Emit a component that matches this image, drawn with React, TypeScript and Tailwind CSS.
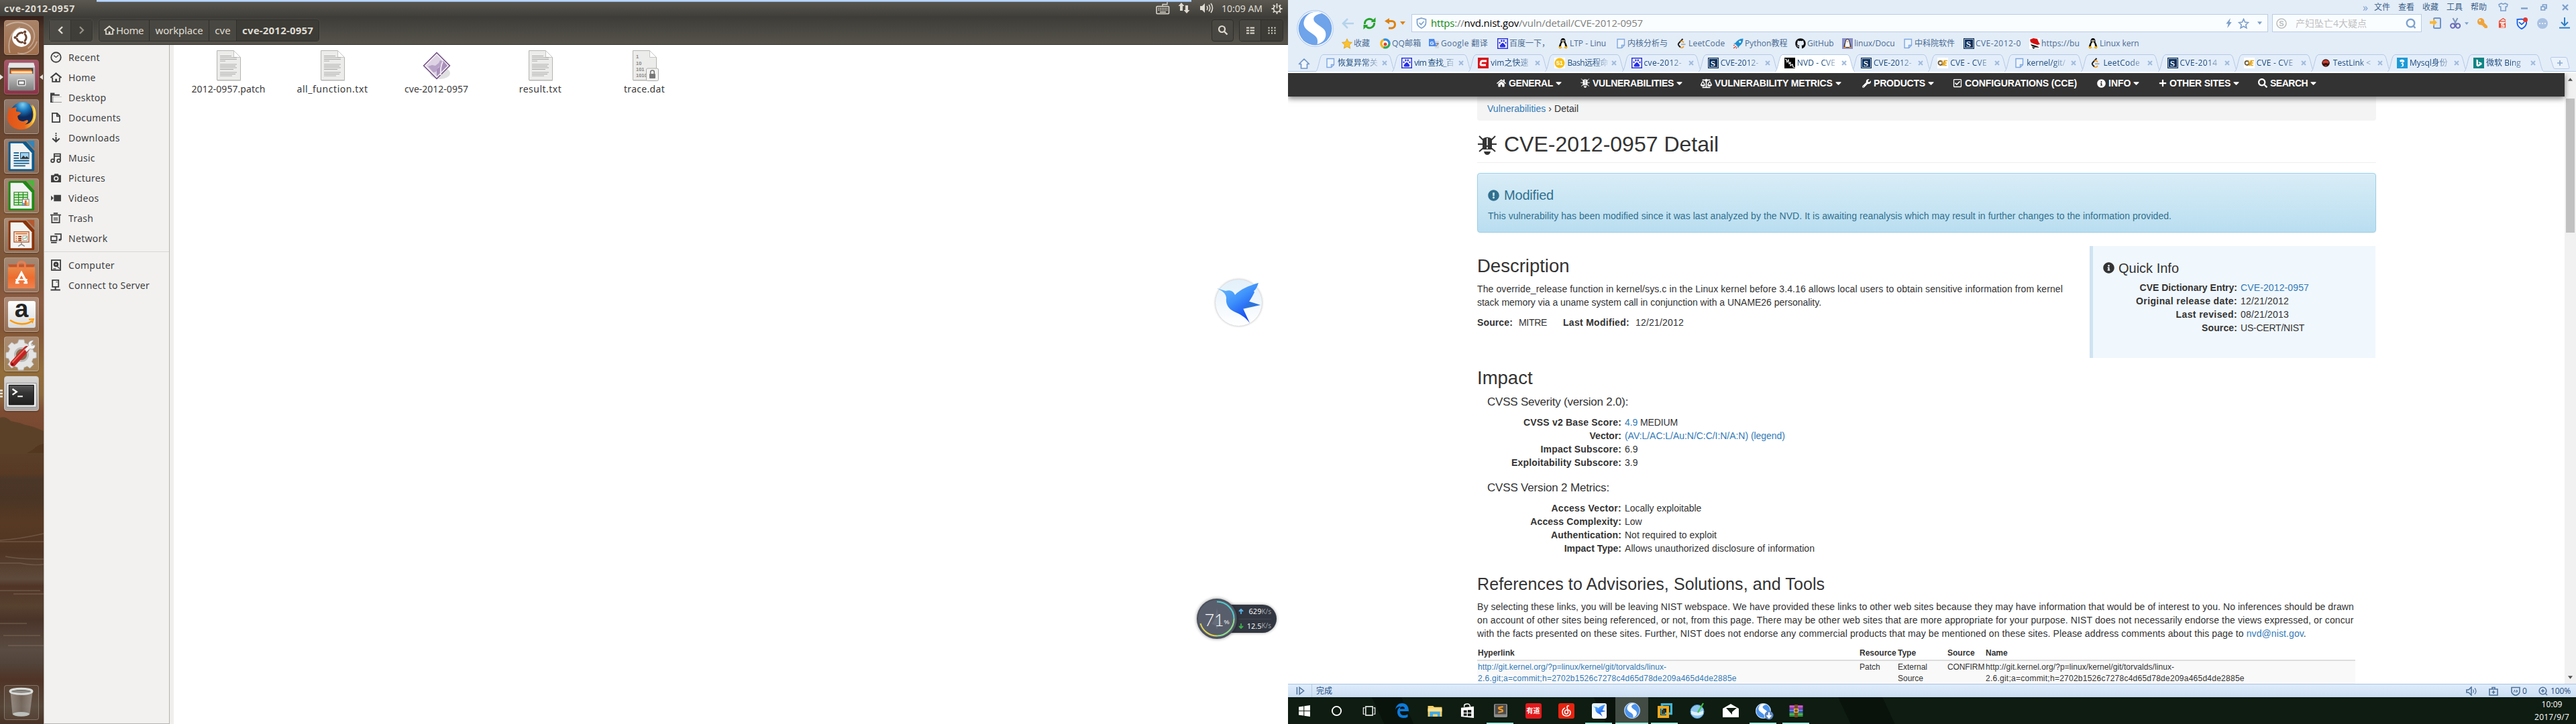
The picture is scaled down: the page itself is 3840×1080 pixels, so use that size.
import type { ReactNode } from "react";
import {
  FaBalanceScale, FaCaretDown, FaGithub, FaHome, FaInfoCircle, FaPlus, FaRegCheckSquare, FaSearch, FaWrench, FaKey, FaExclamationCircle,
} from "react-icons/fa";

/* ---------- Ubuntu side ---------- */

function LauncherArt({ kind }: { kind: string }) {
  switch (kind) {
    case "ubuntu":
      return (
        <svg viewBox="0 0 52 52" className="size-full">
          <path d="M2 8C20-4 48 4 46 26c-1 8-6 14-10 17M8 50C4 36 8 16 24 10M20 50c14 4 26-6 30-18" fill="none" stroke="#fff" strokeOpacity=".35" strokeWidth="2" />
          <circle cx="26" cy="26" r="14.5" fill="#fff" />
          <circle cx="26" cy="26" r="7.4" fill="none" stroke="#6b4430" strokeWidth="3.2" />
          <path d="M26 26 14 26M26 26l6-10.4M26 26l6 10.4" stroke="#fff" strokeWidth="1.6" />
          <circle cx="26" cy="26" r="5.6" fill="#fff" />
          <circle cx="16.2" cy="26" r="2.2" fill="#6b4430" /><circle cx="31.3" cy="17.4" r="2.2" fill="#6b4430" /><circle cx="31.3" cy="34.6" r="2.2" fill="#6b4430" />
        </svg>
      );
    case "files":
      return (
        <svg viewBox="0 0 52 52" className="size-full">
          <defs><linearGradient id="cab" x2="0" y2="1"><stop offset="0" stopColor="#c9c9c9" /><stop offset="1" stopColor="#7d7d7d" /></linearGradient></defs>
          <path d="M7 4h38l2 8v34H5V12z" fill="#b5b5b5" /><path d="M7 4h38l2 7H5z" fill="#e6e6e6" />
          <path d="M8 12h36v9H8z" fill="#3c3430" /><path d="M9 14h33v7H9z" fill="#e2711d" /><path d="M11 17h32v4H11z" fill="#f6b26b" /><path d="M10 17.500h32v1.500H10z" fill="#fff" />
          <path d="M7 21h38v26H7z" fill="url(#cab)" />
          <rect x="19" y="29" width="14" height="11" rx="2" fill="#d9d9d9" /><rect x="21.500" y="32" width="9" height="5.500" fill="#f3f3f3" stroke="#444" strokeWidth="1.200" />
        </svg>
      );
    case "firefox":
      return (
        <svg viewBox="0 0 52 52" className="size-full">
          <defs>
            <radialGradient id="fxb" cx=".5" cy=".1"><stop offset="0" stopColor="#7fd0f0" /><stop offset=".5" stopColor="#1a78bd" /><stop offset="1" stopColor="#0e2a5c" /></radialGradient>
            <linearGradient id="fxo" x1="0" x2="1"><stop offset="0" stopColor="#e0541a" /><stop offset=".6" stopColor="#e8641b" /><stop offset="1" stopColor="#fbd23a" /></linearGradient>
          </defs>
          <circle cx="28" cy="23" r="19.500" fill="url(#fxb)" />
          <path d="M7 9c1 4 2 5 3 5 2-2 6-3 9-2-1 2-2 4-1 6 3 0 6 1 7 2 0 3-4 3-5 5 0 6 4 9 10 8 3-1 5-2 6-1 1 2-2 5-5 6 8 0 13-6 13-15 0-7-2-12-5-16 7 4 10 10 9 19-1 11-10 20-22 20S4 38 4 27C4 20 7 16 7 9z" fill="url(#fxo)" />
          <path d="M42 7c5 9 6 20 0 29 4-2 6-8 6-12 1-7-1-13-6-17z" fill="#fde05a" />
        </svg>
      );
    case "writer":
    case "calc":
    case "impress": {
      const c = kind === "writer" ? ["#0b5a8e", "#2f86bd"] : kind === "calc" ? ["#1c8a14", "#4bb53c"] : ["#8a3208", "#b3592f"];
      return (
        <svg viewBox="0 0 52 52" className="size-full">
          <path d="M9 3h24l13 15v29q0 2-2 2H8q-2 0-2-2V5q0-2 3-2z" fill={c[0]} />
          <path d="M34 2h12v12z" fill={c[1]} />
          <path d="M9 6h19l14 15v25H9z" fill="#f3f3f3" />
          {kind === "writer" && (<>
            <path d="M14 21h8M14 25h8M14 29h8M14 33h24M14 37h24M14 41h18" stroke="#0b5a8e" strokeWidth="1.900" />
            <rect x="24.500" y="20.500" width="13" height="9.500" fill="#9fd3f2" stroke="#0b4a74" /><path d="M25 30l4-5 3 3 2-2 4 4z" fill="#333" />
          </>)}
          {kind === "calc" && (<>
            <path d="M14.500 20.500h21v20h-21zM14.500 24.500h21M14.500 28.500h21M14.500 32.500h21M14.500 36.500h21M21.500 20.500v20M28.500 20.500v20" fill="#d7f2cf" stroke="#1c8a14" strokeWidth="1.200" />
            <rect x="27.500" y="31.500" width="10" height="9.500" fill="#fff" stroke="#777" /><path d="M28.500 37h2.500v4h-2.500z" fill="#2a9fe0" /><path d="M31 33h3v8h-3z" fill="#e0662a" /><path d="M34.500 36h2.500v5h-2.500z" fill="#f3b72e" />
          </>)}
          {kind === "impress" && (<>
            <rect x="14.500" y="20.500" width="23" height="16" fill="#fbe8dd" stroke="#b3501c" strokeWidth="1.300" />
            <path d="M17 23.500h18" stroke="#e0762a" strokeWidth="1.800" /><path d="M17 28h2M17 31h2M17 34h2" stroke="#e0762a" strokeWidth="1.500" /><path d="M21 28h5M21 31h5M21 34h5" stroke="#8a3208" strokeWidth="1.900" />
            <path d="M28 27h7v7h-7z" fill="#fff" stroke="#999" /><path d="M29 32l2-2 1 1 2-3" fill="none" stroke="#3a3" /><path d="M26 37v3l-5 3M26 40l5 3" fill="none" stroke="#888" strokeWidth="1.500" />
          </>)}
        </svg>
      );
    }
    case "software":
      return (
        <svg viewBox="0 0 52 52" className="size-full">
          <defs><linearGradient id="bag" x2="0" y2="1"><stop offset="0" stopColor="#e88a4c" /><stop offset=".5" stopColor="#ee6c2c" /><stop offset="1" stopColor="#f0834e" /></linearGradient></defs>
          <path d="M5 10h42l-3 5H8z" fill="#c4552a" /><path d="M5 14h42v33H5z" fill="url(#bag)" />
          <path d="M20.500 17v-7q0-4 5.500-4t5.500 4v7" fill="none" stroke="#f07c4a" strokeWidth="3" />
          <path d="M18 38l8-15 8 15" fill="none" stroke="#fff" strokeWidth="3.600" /><path d="M17 33.500h18M16.500 38.500h6M29.500 38.500h6" stroke="#fff" strokeWidth="2.400" />
        </svg>
      );
    case "amazon":
      return (
        <div className="relative mx-auto mt-[5px] h-[40px] w-[41px] rounded-[3px] bg-gradient-to-b from-white to-[#d9d9d9] text-center">
          <span className="block h-[28px] font-['Liberation_Sans'] text-[37px] leading-[23px] font-bold text-[#222]">a</span>
          <svg viewBox="0 0 41 12" className="absolute bottom-[2px] left-0 h-[13px] w-full"><path d="M3 3c10 7 24 8 33 1" fill="none" stroke="#f90" strokeWidth="2.400" /><path d="M31 2l7-.5-2 6" fill="none" stroke="#f90" strokeWidth="1.800" /></svg>
        </div>
      );
    case "settings":
      return (
        <svg viewBox="0 0 52 52" className="size-full">
          <path d="M22 4h8l1 5 5 2 4-3 6 6-3 4 2 5 4 1v8l-5 1-2 5 3 4-6 6-4-3-5 2-1 4h-8l-1-4-5-2-4 3-6-6 3-4-2-5-4-1v-8l4-1 2-5-3-4 6-6 4 3 5-2z" fill="#e4e4e4" stroke="#bbb" />
          <circle cx="26" cy="27" r="10" fill="#8d6a4c" stroke="#bbb" strokeWidth="3" />
          <path d="M34 18 13 41" stroke="#c32222" strokeWidth="9" strokeLinecap="round" /><path d="M33 17 12 39" stroke="#e86a5c" strokeWidth="2" />
          <path d="M31 19l6-6c-2-5 3-9 8-8l-4 5 1 3 5-1c1 5-4 8-8 6l-5 5z" fill="#f2f2f2" stroke="#999" strokeWidth=".8" />
          <circle cx="12" cy="42" r="1.800" fill="#7a1111" />
        </svg>
      );
    case "terminal":
      return (
        <svg viewBox="0 0 52 52" className="size-full">
          <defs><linearGradient id="term" x2="0" y2="1"><stop offset="0" stopColor="#5a5a5a" /><stop offset=".4" stopColor="#333" /><stop offset="1" stopColor="#1f1f1f" /></linearGradient></defs>
          <path d="M3 10h46v37H3z" fill="#eee" stroke="#777" strokeWidth=".8" /><path d="M6.500 13h38.500v30.500H6.500z" fill="url(#term)" stroke="#000" />
          <path d="M12 19l6.500 4.500L12 28" fill="none" stroke="#fff" strokeWidth="2.400" /><path d="M20 30.500h8" stroke="#fff" strokeWidth="2" />
        </svg>
      );
    default:
      return (
        <svg viewBox="0 0 52 52" className="size-full">
          <defs><linearGradient id="bin"><stop offset="0" stopColor="#fff" stopOpacity=".35" /><stop offset=".5" stopColor="#fff" stopOpacity=".15" /><stop offset="1" stopColor="#fff" stopOpacity=".35" /></linearGradient></defs>
          <path d="M9 11h34l-4 33q-13 5-27 0z" fill="url(#bin)" /><ellipse cx="25.500" cy="44" rx="13" ry="3.500" fill="#c9cfcc" fillOpacity=".85" />
          <ellipse cx="25.500" cy="8.500" rx="17" ry="4" fill="none" stroke="#d9dcda" strokeWidth="3.400" /><ellipse cx="25.500" cy="9" rx="15" ry="2" fill="#8d8a86" />
        </svg>
      );
  }
}

const glass = "bg-gradient-to-b from-white/30 to-white/15 border-white/25";
const launcher: [string, string][] = [
  ["ubuntu", "bg-gradient-to-b from-[#a98368] to-[#a06f4c] border-[#b58e74]"],
  ["files", "bg-gradient-to-b from-[#a4596a] to-[#8a3448] border-[#a85a66]"],
  ["firefox", glass], ["writer", glass], ["calc", glass], ["impress", glass], ["software", glass], ["amazon", glass], ["settings", glass],
  ["terminal", "bg-gradient-to-b from-[#d9d7d5] to-[#aaa6a4] border-[#c9c5c2]"],
];

function Launcher() {
  return (
    <aside className="relative flex w-[65px] shrink-0 flex-col bg-[linear-gradient(to_bottom,#33201a_0,#4d3327_20px,#5b3d2b_90px,#6f4a33_200px,#845b3b_300px,#7d563a_380px,#8d5c41_430px,#855837_470px,#936d3a_530px,#8d693c_565px,#7d4c33_590px,#75482f_630px,#5a3f28_650px,#583a24_682px,#4b3728_690px,#4a3525_720px,#583a24_755px,#4f3524_800px,#5e4a3b_840px,#503527_850px,#57412f_880px,#4a3429_900px,#5a4c42_945px,#52443a_965px,#4f3426_990px,#554638_1030px,#493226_1056px)] px-[6px] pt-[6px]">
      <svg viewBox="0 0 65 400" className="absolute top-[594px] left-0 h-[400px] w-[65px]">
        <path d="M0 5q8-3 16 5 12 2 22 6 10 1 27 9v34H0z" fill="#5c4129" />
        <path d="M50 52q5-6 15-8v14H40z" fill="#54371f" />
        <path d="M0 188q30-2 65-10M0 190h65M8 212q20 4 57 4M0 222h30q20 4 35 2M0 263h60M20 268h45M5 330h55M0 312h40M12 345h53" fill="none" stroke="#8d7a68" strokeOpacity=".45" strokeWidth="1.300" />
      </svg>
      <div className="relative flex flex-1 flex-col gap-[7px]">
        {launcher.map(([k, c]) => (
          <div key={k} className={`h-[52px] w-[52px] rounded-[4px] border ${c} shadow-[0_1px_2px_rgba(0,0,0,.35)]`}><LauncherArt kind={k} /></div>
        ))}
        <div className="mt-auto mb-[6px] h-[52px] w-[52px] rounded-[4px] border border-white/25 bg-white/5"><LauncherArt kind="trash" /></div>
      </div>
      <svg viewBox="0 0 5 8" className="absolute top-[87px] left-0 h-[8px] w-[5px]"><path d="M0 0l5 4-5 4z" fill="#e8e4e0" /></svg>
      <svg viewBox="0 0 5 8" className="absolute top-[87px] left-[59px] h-[8px] w-[5px]"><path d="M5 0 0 4l5 4z" fill="#e8e4e0" /></svg>
      <svg viewBox="0 0 5 12" className="absolute top-[557px] left-0 h-[12px] w-[5px]"><path d="M0 1.500h4M0 6h4M0 10.500h4" stroke="#e8e4e0" strokeWidth="2.400" /></svg>
    </aside>
  );
}

function PlaceIcon({ kind, className = "size-[17px]" }: { kind: string; className?: string }) {
  const s = { fill: "none", stroke: "currentColor", strokeWidth: 1.7 } as const;
  return (
    <svg viewBox="0 0 16 16" className={className}>
      {kind === "Recent" && <g {...s}><circle cx="8" cy="8" r="6.800" /><path d="M4.800 5.500 8 8l3.500-3" strokeWidth="1.200" /></g>}
      {kind === "Home" && <><path d="M.5 8.500 8 2.200l7.500 6.300" {...s} strokeWidth="2" /><path d="M3 8v6h10V8" {...s} /><path d="M6.800 10h2.600v4H6.800z" fill="currentColor" /></>}
      {kind === "Desktop" && <path d="M0 1.500h6v2h7v2H2.500v8.500H16V6.800H4V15H0z M3.500 6.500H16v8H3.500z" fill="currentColor" />}
      {kind === "Documents" && <path d="M2.800 1.800h6.700l3.700 3.700v8.800H2.800zM9.300 2v4h4" {...s} />}
      {kind === "Downloads" && <><path d="M8 1v6" {...s} strokeDasharray="1.800 1" /><path d="M8 7v6M3 9l5 4.500L13 9" {...s} strokeWidth="2" /></>}
      {kind === "Music" && <g {...s}><path d="M5.500 12V2.500h8.500v9.500M5.500 5.500h8" /><circle cx="3.300" cy="12" r="2.200" /><circle cx="11.800" cy="12" r="2.200" /></g>}
      {kind === "Pictures" && <><path d="M1 4h4l1-2h5l1 2h3v10H1z" fill="currentColor" /><circle cx="8.200" cy="8.800" r="2.700" fill="none" stroke="#f2f1f0" strokeWidth="1.500" /></>}
      {kind === "Videos" && <path d="M5 3.500h10v9H5zM1 4.500 4.500 8 1 11.500z" fill="currentColor" />}
      {kind === "Trash" && <><path d="M0 3.500h15M4.500 1.200h6" {...s} /><path d="M2.200 4v10.300h10.600V4" {...s} /><path d="M5.500 6.500v5M7.500 6.500v5M9.500 6.500v5" {...s} strokeWidth="1.100" /></>}
      {kind === "Network" && <><path d="M6 2h9v7.500h-3M1 5.200h8v6H1z" {...s} /><path d="M1 13h8v1.800H1zM12.500 9l3 2.500h-4z" fill="currentColor" /></>}
      {kind === "Computer" && <><rect x="1.800" y="1" width="12.400" height="14" {...s} /><circle cx="8" cy="7" r="3.600" fill="currentColor" /><path d="M8 8l5 5M4 13h4" {...s} strokeWidth="1.200" /><circle cx="8" cy="7" r="1" fill="#f2f1f0" /></>}
      {kind === "Connect to Server" && <><rect x="3" y=".8" width="8.500" height="9.500" {...s} /><path d="M7.200 10v4M.5 14.600h13.500" {...s} strokeWidth="1.900" /><path d="M8 3.500h2" {...s} strokeWidth="1" /></>}
    </svg>
  );
}

function FileArt({ kind }: { kind: string }) {
  if (kind === "exe")
    return (
      <svg viewBox="0 0 42 46" className="h-[46px] w-[42px]">
        <ellipse cx="26" cy="34" rx="15" ry="9" fill="#000" fillOpacity=".12" />
        <path d="M21 3.500 40.500 23 21 42.500 1.500 23z" fill="#ddd3e4" stroke="#6f4a80" strokeWidth="1.400" />
        <path d="M21 6 38 23 21 40 4 23z" fill="none" stroke="#fff" strokeOpacity=".7" strokeWidth="1.200" />
        <path d="M21 28l4-3 1-6 5-3 6 7-16 16z" fill="#a98fbb" /><path d="M8 24l6-2 5 1 5-4 2-4 3 1-2 6-5 5-2 5-4 1z" fill="#b8a3c8" /><path d="M27 37q-1-12 3-20" stroke="#ece5f0" strokeWidth="2" fill="none" />
      </svg>
    );
  return (
    <svg viewBox="0 0 42 46" className="h-[46px] w-[42px]">
      <path d="M3.500.5h25l10 10v34h-35z" fill="#ececea" stroke="#b4b4b2" /><path d="M28.500.5v10h10z" fill="#fdfdfd" stroke="#c6c6c4" /><path d="M4 45.500h35" stroke="#000" strokeOpacity=".15" />
      {kind === "text" ? (
        <path d="M8 8.500h17M8 11h25M8 13.500h25M8 16h8M8 21h25M8 23.500h23M8 26h25M8 28.500h20M8 33h25M8 35.500h23M8 38h18" stroke="#a9a9a7" strokeWidth="1.100" />
      ) : (<>
        <text x="8" y="12" fontFamily="Liberation Sans" fontSize="7.500" fontWeight="700" fill="#888">1</text>
        <text x="8" y="21.500" fontFamily="Liberation Sans" fontSize="7.500" fontWeight="700" fill="#888">10</text>
        <text x="8" y="31" fontFamily="Liberation Sans" fontSize="7.500" fontWeight="700" fill="#888">101</text>
        <text x="8" y="40" fontFamily="Liberation Sans" fontSize="7.500" fontWeight="700" fill="#888">1010</text>
        <rect x="23.500" y="27" width="18" height="18.500" rx="2" fill="#f3f3f1" stroke="#aaa" /><rect x="28" y="35" width="9" height="7" rx="1" fill="#777" /><path d="M29.700 35v-2.500q0-2.500 2.800-2.500t2.800 2.500V35" fill="none" stroke="#777" strokeWidth="1.600" />
      </>)}
    </svg>
  );
}

const places: [string, string][] = [
  ["Recent", "tracking-[0.35px]"], ["Home", "tracking-[0.2px]"], ["Desktop", "tracking-[0.3px]"], ["Documents", "tracking-[0.28px]"], ["Downloads", "tracking-[0.4px]"],
  ["Music", "tracking-[0.3px]"], ["Pictures", "tracking-[0.3px]"], ["Videos", "tracking-[0.3px]"], ["Trash", "tracking-[0.3px]"], ["Network", "tracking-[0.3px]"],
];
const devices: [string, string][] = [["Computer", "tracking-[0.32px]"], ["Connect to Server", "tracking-[0.22px]"]];
const files: [string, string, string][] = [
  ["2012-0957.patch", "text", "tracking-[0.05px]"], ["all_function.txt", "text", "tracking-[0.55px]"], ["cve-2012-0957", "exe", "tracking-[0px]"], ["result.txt", "text", "tracking-[0.5px]"], ["trace.dat", "data", "tracking-[0.3px]"],
];

function PlaceRow({ name, track }: { name: string; track: string }) {
  return <li className={`flex h-[30px] items-center gap-[10px] pl-[9px] text-[14px] text-[#3f3f3f] ${track}`}><PlaceIcon kind={name} />{name}</li>;
}

function UbuntuDesktop() {
  const btn = "flex items-center justify-center";
  return (
    <section className="relative flex h-full w-[1920px] shrink-0 flex-col font-['Noto_Sans',sans-serif]">
      <header className="relative flex h-[24px] items-center bg-gradient-to-b from-[#5a5850] to-[#413f3a] pl-[6px] text-[14px] text-[#dfdbd2]">
        <span className="font-bold tracking-[0.72px]">cve-2012-0957</span>
        <div className="mr-[8px] ml-auto flex items-center">
          <svg viewBox="0 0 21 20" className="mr-[12px] h-[20px] w-[21px]"><rect x="1" y="7.500" width="18.500" height="11" rx="1" fill="none" stroke="#dfdbd2" strokeWidth="1.500" /><path d="M3.500 10.500h14M3.500 13h14" stroke="#dfdbd2" strokeWidth="1.300" strokeDasharray="1.600 1" /><path d="M6 16h9M10 7V4.500h7V1" fill="none" stroke="#dfdbd2" strokeWidth="1.300" /></svg>
          <svg viewBox="0 0 18 18" className="mr-[14px] h-[18px] w-[18px]"><path d="M5 1 .5 6H3v7h4V6h2.500zM13 17l4.500-5H15V5h-4v7H8.500z" fill="#dfdbd2" /></svg>
          <svg viewBox="0 0 21 18" className="mr-[12px] h-[18px] w-[21px]"><path d="M1 6h3l4-4v14l-4-4H1z" fill="#dfdbd2" /><path d="M11 6q2 3 0 6M14 4q3.500 5 0 10M17 2q5 7 0 14" fill="none" stroke="#dfdbd2" strokeWidth="1.600" /></svg>
          <span className="w-[61px] whitespace-nowrap">10:09 AM</span>
          <svg viewBox="0 0 18 18" className="ml-[13px] h-[17px] w-[17px]"><circle cx="9" cy="9.500" r="5.200" fill="none" stroke="#dfdbd2" strokeWidth="2" /><path d="M9 0v8" stroke="#4a4842" strokeWidth="5" /><path d="M9 1v8M9 15v3M.5 9.500h3M14.500 9.500h3M3 3.500l2 2M15 3.500l-2 2M3 15.500l2-2M15 15.500l-2-2" stroke="#dfdbd2" strokeWidth="2" /></svg>
        </div>
        <div className="absolute top-0 left-[144px] h-[3px] w-[1632px] border-b border-[#86aede] bg-[#bdd4f1]" />
      </header>
      <div className="flex min-h-0 flex-1">
        <Launcher />
        <div className="flex min-w-0 flex-1 flex-col">
          <div className="flex h-[43px] shrink-0 items-center border-b border-[#33322e] bg-gradient-to-b from-[#3d3c38] to-[#56534b] pr-[7px] pl-[8px] text-[#dfdbd2]">
            <div className="flex h-[33px] w-[65px] rounded-[4px] border border-[#35342f] shadow-[0_0_0_1px_rgba(255,255,255,.05)]">
              <div className={`${btn} w-[31px] bg-[#4c4a44]`}><svg viewBox="0 0 8 12" className="h-[12px] w-[8px]"><path d="M7 1 2 6l5 5" fill="none" stroke="#dfdbd2" strokeWidth="2.400" /></svg></div>
              <div className={`${btn} flex-1 border-l border-[#35342f] bg-[#403e39]`}><svg viewBox="0 0 8 12" className="h-[12px] w-[8px]"><path d="M1 1l5 5-5 5" fill="none" stroke="#96938b" strokeWidth="2.200" /></svg></div>
            </div>
            <div className="ml-[9px] flex h-[33px] w-[329px] overflow-hidden rounded-[4px] border border-[#302f2b] text-[15px] shadow-[0_0_0_1px_rgba(255,255,255,.05)]">
              <div className="flex w-[75px] items-center gap-[2px] border-r border-[#302f2b] bg-[#494741] pl-[7px] tracking-[-0.4px]"><PlaceIcon kind="Home" className="size-[16px]" />Home</div>
              <div className={`${btn} w-[89px] border-r border-[#302f2b] bg-[#494741] tracking-[-0.14px]`}>workplace</div>
              <div className={`${btn} w-[41px] border-r border-[#302f2b] bg-[#494741]`}>cve</div>
              <div className={`${btn} flex-1 bg-[#3d3c37] font-bold tracking-[0.19px]`}>cve-2012-0957</div>
            </div>
            <div className={`${btn} ml-auto h-[33px] w-[33px] rounded-[4px] border border-[#302f2b] bg-[#494741]`}>
              <svg viewBox="0 0 16 16" className="size-[16px]"><circle cx="6.500" cy="6.500" r="4.500" fill="none" stroke="#dfdbd2" strokeWidth="2.200" /><path d="m10 10 4.500 4.500" stroke="#dfdbd2" strokeWidth="2.400" /></svg>
            </div>
            <div className="ml-[8px] flex h-[33px] w-[66px] overflow-hidden rounded-[4px] border border-[#302f2b]">
              <div className={`${btn} w-[32px] border-r border-[#302f2b] bg-[#494741]`}><svg viewBox="0 0 12 11" className="h-[11px] w-[12px]"><path d="M0 1.500h4M0 5.500h4M0 9.500h4M5.500 1.500H12M5.500 5.500H12M5.500 9.500H12" stroke="#dfdbd2" strokeWidth="2" /></svg></div>
              <div className={`${btn} flex-1 bg-[#3d3c37]`}><svg viewBox="0 0 12 11" className="h-[11px] w-[12px]"><path d="M.5 1.500H12M.5 5.500H12M.5 9.500H12" stroke="#dfdbd2" strokeWidth="2" strokeDasharray="2 2.500" /></svg></div>
            </div>
          </div>
          <div className="flex min-h-0 flex-1">
            <nav className="w-[188px] shrink-0 border-x border-b border-[#b6b3ae] bg-[#f2f1f0]">
              <ul className="border-b border-[#d9d7d4] pt-[3px] pb-[5px]">{places.map(([n, t]) => <PlaceRow key={n} name={n} track={t} />)}</ul>
              <ul className="pt-[4px]">{devices.map(([n, t]) => <PlaceRow key={n} name={n} track={t} />)}</ul>
            </nav>
            <div className="w-[6px] shrink-0 bg-[#f0efee]" />
            <div className="flex flex-1 items-start bg-white pt-[8px] pl-[4px]">
              {files.map(([n, k, t]) => (
                <figure key={n} className="flex w-[155px] flex-col items-center">
                  <FileArt kind={k} />
                  <figcaption className={`mt-[2px] text-[14px] leading-[20px] text-[#3c3c3c] ${t}`}>{n}</figcaption>
                </figure>
              ))}
            </div>
          </div>
        </div>
      </div>
      <DesktopWidgets />
    </section>
  );
}

function Bird({ id, className }: { id: string; className: string }) {
  return (
    <svg viewBox="0 0 66 60" className={className}>
      <defs><linearGradient id={id} x2=".7" y2="1"><stop offset="0" stopColor="#6fc4fb" /><stop offset=".5" stopColor="#3f92fb" /><stop offset="1" stopColor="#0c3df0" /></linearGradient></defs>
      <path d="M46 27l19 6-27 6z" fill="#2c74dd" />
      <path d="M0 8l13 4c7-2 12 1 14 6C34 10 48 4 62 0c-2 6-4 10-7 12l1 2c-4 8-9 17-17 24l10 22C42 50 33 46 26 43 16 38 13 31 14 22 13 15 8 12 0 8z" fill={`url(#${id})`} />
    </svg>
  );
}

function DesktopWidgets() {
  return (
    <>
      <div className="absolute top-[416px] left-[1811px] flex size-[71px] items-center justify-center rounded-full border border-[#dcdcdc] bg-gradient-to-b from-[#e2f0fa] to-white shadow-[0_0_3px_rgba(0,0,0,.2)]">
        <Bird id="bird-float" className="h-[60px] w-[66px]" />
      </div>
      <div className="absolute top-[902px] left-[1813px] flex h-[42px] w-[90px] flex-col rounded-r-full bg-[#323741] pr-[8px] pl-[33px] font-['Open_Sans'] text-[11px] text-white shadow-[0_0_4px_rgba(0,0,0,.4)]">
        <div className="flex flex-1 items-center border-b border-[#40454f]"><svg viewBox="0 0 8 8" className="size-[8px]"><path d="M4 8V2M1 4l3-3 3 3" stroke="#56b4e8" strokeWidth="1.800" fill="none" /></svg><span className="ml-auto">629</span><span className="text-[10px] text-[#a2a6ae]">K/s</span></div>
        <div className="flex flex-1 items-center"><svg viewBox="0 0 8 8" className="size-[8px]"><path d="M4 0v6M1 4l3 3 3-3" stroke="#3dae4b" strokeWidth="1.800" fill="none" /></svg><span className="ml-auto">12.5</span><span className="text-[10px] text-[#a2a6ae]">K/s</span></div>
      </div>
      <div className="absolute top-[893px] left-[1784px] flex size-[60px] items-center justify-center rounded-full border-2 border-[#4a4f5b] bg-[#595e6c] pt-[2px] text-white shadow-[0_0_5px_rgba(0,0,0,.45)]">
        <svg viewBox="0 0 60 60" className="absolute -top-[2px] -left-[2px] size-[60px]">
          <path d="M30 14v32l-2-6-6-2 5-8z M30 14v32l2-6 6-2-5-8z" fill="#666c7a" />
          <path d="M30 4.500A25.500 25.500 0 0 1 55.500 30" fill="none" stroke="#4ed0cf" strokeWidth="2" /><path d="M55.500 30A25.500 25.500 0 0 1 30 55.500" fill="none" stroke="#8fe08a" strokeWidth="2" /><path d="M30 55.500A25.500 25.500 0 0 1 5.500 37" fill="none" stroke="#e0d553" strokeWidth="2" />
        </svg>
        <span className="relative font-['Lato'] text-[25px] leading-none font-light">71</span><span className="relative mt-[9px] font-['Liberation_Sans'] text-[9px]">%</span>
      </div>
    </>
  );
}

/* ---------- Browser side ---------- */

function Fav({ kind, className = "size-[16px]" }: { kind: string; className?: string }) {
  const c = `${className} shrink-0`;
  switch (kind) {
    case "star": return <svg viewBox="0 0 16 16" className={c}><path d="m8 .8 2.200 4.900 5.300.6-4 3.600 1.100 5.300L8 12.500l-4.600 2.700 1.100-5.300-4-3.600 5.300-.6z" fill="#fcc32c" stroke="#d99a1c" strokeWidth=".8" /></svg>;
    case "qq": return <svg viewBox="0 0 16 16" className={c}><circle cx="8" cy="8" r="6" fill="none" stroke="#35a853" strokeWidth="3.500" strokeDasharray="12 26" /><circle cx="8" cy="8" r="6" fill="none" stroke="#f2b41b" strokeWidth="3.500" strokeDasharray="13 25" strokeDashoffset="-12" /><circle cx="8" cy="8" r="6" fill="none" stroke="#2f8fe0" strokeWidth="3.500" strokeDasharray="12.700 25" strokeDashoffset="-25" /><circle cx="8" cy="8" r="4.300" fill="#fff" /><circle cx="8" cy="9" r="2.500" fill="#e2402c" /></svg>;
    case "gt": return <svg viewBox="0 0 16 16" className={c}><path d="M6 4h9v11H9z" fill="#d5d9de" /><path d="M0 1h8l3 11H0z" fill="#4a8af0" /><text x="1.500" y="9.500" fontSize="7.500" fontFamily="Liberation Sans" fontWeight="700" fill="#fff">G</text><path d="M10 8h5M12.500 7v1M11 12l3-4" stroke="#667" /></svg>;
    case "baidu": return <svg viewBox="0 0 16 16" className={c}><path d="M0 0h16v16H0z" fill="#2932e1" /><path d="M1.500 1.500h13v13h-13z" fill="#fff" /><g fill="#2932e1"><path d="M8 7c2 0 2 2 3.500 3s1 3.500-1 3.500h-5c-2 0-2.500-2.500-1-3.500S6 7 8 7z" /><ellipse cx="6.400" cy="4" rx="1.200" ry="1.700" /><ellipse cx="9.800" cy="4" rx="1.200" ry="1.700" /><ellipse cx="3.600" cy="6.800" rx="1.100" ry="1.500" /><ellipse cx="12.500" cy="6.800" rx="1.100" ry="1.500" /></g></svg>;
    case "tux": return <svg viewBox="0 0 16 16" className={c}><path d="M8 0c3 0 3.500 2.500 3.500 5 0 2 2.500 4 2.500 8H2c0-4 2.500-6 2.500-8C4.500 2.500 5 0 8 0z" fill="#111" /><path d="M8 6c2 0 3 3 3 7H5c0-4 1-7 3-7z" fill="#fff" /><circle cx="6.800" cy="3.700" r="1" fill="#fff" /><circle cx="9.200" cy="3.700" r="1" fill="#fff" /><path d="M6.500 5h3L8 6.500zM1 13l4-1.500 1.500 3L3 16zM15 13l-4-1.500-1.500 3L13 16z" fill="#f3b41a" /></svg>;
    case "tuxbox": return <svg viewBox="0 0 16 16" className={c}><path d="M0 0h16v16H0z" fill="#8a8fc8" /><path d="M8 1c3 0 3 3 3.500 5S14 10 13 14H3c-1-4 1-6 1.500-8S5 1 8 1z" fill="#333" /><path d="M8 2c2 0 2 2 2.500 4s1.500 4 1 7h-7c-.500-3 .500-5 1-7s.500-4 2.500-4z" fill="#fff" /><path d="M6.500 4.500h3L8 6.500zM2 14l3-2 1 3.500zM14 14l-3-2-1 3.500z" fill="#f08a24" /></svg>;
    case "page": return <svg viewBox="0 0 16 16" className={c}><path d="M3 1.500h10.500v9l-4 4H3z" fill="#eef5fd" stroke="#7fa9e0" strokeWidth="1.400" /><path d="M13.500 10.500h-4v4" fill="none" stroke="#7fa9e0" strokeWidth="1.400" /></svg>;
    case "leet": return <svg viewBox="0 0 16 16" className={c}><path d="M9.500 1 3.500 7.500q-1.500 1.700 0 3.500l2.500 2.500" fill="none" stroke="#222" strokeWidth="1.900" /><path d="M6 13.500q1.800 1.500 3.700 0l1.300-1.300M11 6.500l-1.300-1.300q-1.700-1.300-3.500 0" fill="none" stroke="#f0a030" strokeWidth="1.900" /><path d="M7 9.200h6.500" stroke="#aaa" strokeWidth="1.900" /></svg>;
    case "rocket": return <svg viewBox="0 0 16 16" className={c}><path d="M15.500.5C10 .500 6.500 3.500 4 7L1 8l3 1 3 3 1 3 1.500-3C13 9.500 15.500 6 15.500.5z" fill="#1d8fd0" /><circle cx="10.800" cy="5.200" r="1.500" fill="#fff" /><path d="M1 11l2-1M1 15l4-3M5 15.500l1-2" stroke="#e5402c" strokeWidth="1.300" /></svg>;
    case "github": return <FaGithub className={`${c} text-[#111]`} />;
    case "s": return <svg viewBox="0 0 16 16" className={c}><path d="M0 0h16v16H0z" fill="#0a2f5c" /><path d="M1.500 1.500h13v13h-13z" fill="none" stroke="#fff" strokeWidth=".7" /><text x="3.700" y="13" fontSize="13" fontFamily="Liberation Serif" fontWeight="700" fill="#fff">S</text></svg>;
    case "redhat": return <svg viewBox="0 0 16 16" className={c}><path d="M0 0h16v16H0z" fill="#fff" /><path d="M1 2l5-2 6 1 2 5 2 3-4 1-6-2-4-2z" fill="#d21010" /><path d="M2 9l4 1 6 2 3 2-6-.5-5-1.500zM4 13l5 1-3 2z" fill="#111" /></svg>;
    case "csdn": return <svg viewBox="0 0 16 16" className={c}><path d="M0 0h16v16H0z" fill="#d8141c" /><path d="M13 5H6.500Q5 5 4.500 6.500L4 9.500Q4 11 5.500 11H12" fill="none" stroke="#fff" strokeWidth="2.800" /></svg>;
    case "51": return <svg viewBox="0 0 16 16" className={c}><path d="M0 0h16v16H0z" fill="#fff" /><circle cx="8" cy="8" r="7.500" fill="#f8bf12" /><text x="3" y="11.200" fontSize="9" fontFamily="Liberation Sans" fontWeight="700" fill="#fff">51</text></svg>;
    case "nvd": return <svg viewBox="0 0 16 16" className={c}><path d="M0 0h16v16H0z" fill="#000" /><path d="M1 2l2 1 1 4 2-4 1 6 2-2 0 5 3-2 1 4 3 1" fill="none" stroke="#fff" strokeWidth="1.100" /></svg>;
    case "cve": return <svg viewBox="0 0 16 16" className={c}><path d="M0 0h16v16H0z" fill="#fff" /><circle cx="4.500" cy="8" r="3" fill="none" stroke="#6b5a3a" strokeWidth="1.800" /><path d="M6.500 4l2 8 2-8" fill="none" stroke="#d39a1c" strokeWidth="1.500" /><path d="M15 4.500h-3.500l-.7 7H14M11 8h3" fill="none" stroke="#e8a81e" strokeWidth="1.600" /></svg>;
    case "testlink": return <svg viewBox="0 0 16 16" className={c}><circle cx="8" cy="8" r="5.800" fill="#2a1512" /><path d="M3 6q5-5 10 0l-1.500 3Q8 7 4.500 9z" fill="#d23c30" /><path d="M6 11l2 3 2-3z" fill="#b22" /></svg>;
    case "mysql": return <svg viewBox="0 0 16 16" className={c}><path d="M0 0h16v16H0z" fill="#1c9bd7" /><path d="M4 4q5-3 7.500 1-.500 2-3 2.500Q11 9 9.500 13L5 14q4-2 3-4L6 9l3-3-4 .5z" fill="#fff" /></svg>;
    case "bing": return <svg viewBox="0 0 16 16" className={c}><path d="M0 0h16v16H0z" fill="#0d8484" /><path d="M4.500 2.500 7 3.400v7L10 9 8.500 8.300 7.700 6 12.500 7.800v2.500L7 13.500l-2.500-1.400z" fill="#fff" /></svg>;
    default: return null;
  }
}

const bookmarks: [string, string, string][] = [
  ["star", "收藏", "w-[57px] tracking-[0px]"], ["qq", "QQ邮箱", "w-[73px] tracking-[0.2px]"], ["gt", "Google 翻译", "w-[102px] tracking-[0.4px]"], ["baidu", "百度一下，", "w-[90px]"],
  ["tux", "LTP - Linu", "w-[86px]"], ["page", "内核分析与", "w-[91px]"], ["leet", "LeetCode", "w-[84px] tracking-[0.2px]"], ["rocket", "Python教程", "w-[93px]"], ["github", "GitHub", "w-[70px]"],
  ["tuxbox", "linux/Docu", "w-[90px]"], ["page", "中科院软件", "w-[91px]"], ["s", "CVE-2012-0", "w-[98px] tracking-[0.45px]"], ["redhat", "https://bu", "w-[87px] tracking-[0.13px]"], ["tux", "Linux kern", "w-[90px]"],
];
const tabs: [string, string, string][] = [
  ["page", "恢复异常关", ""], ["baidu", "vim 查找_百", "tracking-[-0.7px]"], ["csdn", "vim之快速", ""], ["51", "Bash远程命", "tracking-[-0.4px]"], ["baidu", "cve-2012-", "tracking-[0.3px]"], ["s", "CVE-2012-", ""], ["nvd", "NVD - CVE", "tracking-[0.1px]"], ["s", "CVE-2012-", ""],
  ["cve", "CVE - CVE", "tracking-[0.2px]"], ["page", "kernel/git/", ""], ["leet", "LeetCode", "tracking-[0.2px]"], ["s", "CVE-2014", "tracking-[0.4px]"], ["cve", "CVE - CVE", "tracking-[0.2px]"], ["testlink", "TestLink <", ""], ["mysql", "Mysql身份", ""], ["bing", "微软 Bing", ""],
];

function SogouS({ className, bg = "#6fa3ea" }: { className: string; bg?: string }) {
  return (
    <svg viewBox="0 0 54 54" className={className}>
      <circle cx="27" cy="27" r="26.300" fill="#fff" stroke="#b3cdee" strokeWidth="1.200" /><circle cx="27" cy="27" r="24.500" fill={bg} />
      <path d="M37 5C26-1 14 5 11 15c-3 9 3 14 11 19 6 4 10 7 8 16 11-3 14-11 12-18-2-6-9-8-14-13-6-5-4-12 9-14z" fill="#fff" />
    </svg>
  );
}

function BrowserChrome() {
  const box = "flex h-[27px] items-center border border-[#b9cce6] bg-[#fafdff]";
  return (
    <header className="shrink-0 bg-[#e3edf8] font-['Open_Sans','Noto_Sans_CJK_SC',sans-serif] text-[12px] text-[#4b6c93]">
      <div className="flex h-[81px]">
        <SogouS className="mt-[15px] ml-[13px] size-[55px] shrink-0" />
        <div className="flex min-w-0 flex-1 flex-col pl-[12px]">
          <div className="flex h-[21px] items-center pr-[11px] text-[#3b5f88]">
            <span className="ml-auto text-[16px] leading-none text-[#7fa0c8]">»</span>
            <span className="ml-[9px]">文件</span><span className="ml-[12px]">查看</span><span className="ml-[12px]">收藏</span><span className="ml-[12px]">工具</span><span className="ml-[12px]">帮助</span>
            <svg viewBox="0 0 16 14" className="ml-[17px] h-[13px] w-[15px]"><path d="M5 1 1 3l1 3.500h2V13h8V6.500h2L15 3l-4-2q-3 2.500-6 0z" fill="none" stroke="#7c9fcb" strokeWidth="1.700" /></svg>
            <svg viewBox="0 0 10 10" className="ml-[19px] size-[10px]"><path d="M0 6.500h10" stroke="#7c9fcb" strokeWidth="2.400" /></svg>
            <svg viewBox="0 0 10 10" className="ml-[19px] size-[10px]"><path d="M1 4h5.500v5H1zM3.500 3.500V1H9v5.500H7" fill="none" stroke="#7c9fcb" strokeWidth="1.700" /></svg>
            <svg viewBox="0 0 10 10" className="ml-[22px] size-[10px]"><path d="m1 1 8 8M9 1 1 9" stroke="#7c9fcb" strokeWidth="2.300" /></svg>
          </div>
          <div className="flex h-[27px] items-center">
            <svg viewBox="0 0 18 16" className="h-[16px] w-[18px]"><path d="M9 1 2 8l7 7M2 8h16" fill="none" stroke="#b5d3ea" strokeWidth="2.600" /></svg>
            <svg viewBox="0 0 20 18" className="ml-[13px] h-[18px] w-[21px]"><path d="M3 10A7 7 0 0 1 15 4.500M17 8A7 7 0 0 1 5 13.500" fill="none" stroke="#27a32c" strokeWidth="3" /><path d="M12 7h7V0zM8 11H1v7z" fill="#27a32c" /></svg>
            <svg viewBox="0 0 18 18" className="ml-[12px] size-[18px]"><path d="M7 1v9L0 5.500z" fill="#de820f" /><path d="M5 5.500h6q4.500.5 4.500 5T11 16H6" fill="none" stroke="#de820f" strokeWidth="3" /></svg>
            <svg viewBox="0 0 8 5" className="ml-[5px] h-[5px] w-[8px]"><path d="M0 0h8L4 5z" fill="#de820f" /></svg>
            <div className={`${box} ml-[9px] w-[1277px] pl-[6px]`}>
              <svg viewBox="0 0 16 17" className="h-[17px] w-[16px]"><path d="M8 1l6.500 2v5q0 5-6.500 8Q1.500 13 1.500 8V3z" fill="none" stroke="#7fa3cf" strokeWidth="1.700" /><path d="M4.700 8l2.600 2.700L11.500 6" fill="none" stroke="#7fa3cf" strokeWidth="1.700" /></svg>
              <span className="ml-[6px] text-[15px] tracking-[-0.2px] text-[#808080]"><span className="text-[#0f8a0f]">https</span>://<span className="text-black">nvd.nist.gov</span>/vuln/detail/CVE-2012-0957</span>
              <svg viewBox="0 0 9 16" className="ml-auto h-[15px] w-[9px]"><path d="M7 0 0 9h3.500L2 16l7-9.500H5.500z" fill="#7c9fcb" /></svg>
              <svg viewBox="0 0 18 17" className="ml-[9px] h-[16px] w-[17px]"><path d="m9 1.500 2.200 5 5.300.5-4 3.600 1.200 5.200L9 13l-4.700 2.800 1.200-5.200-4-3.600 5.300-.5z" fill="none" stroke="#7c9fcb" strokeWidth="1.700" /></svg>
              <svg viewBox="0 0 8 5" className="mr-[8px] ml-[12px] h-[5px] w-[7px]"><path d="M0 0h8L4 5z" fill="#7c9fcb" /></svg>
            </div>
            <div className={`${box} ml-[6px] w-[223px] pr-[7px] pl-[5px]`}>
              <svg viewBox="0 0 16 16" className="size-[16px]"><circle cx="8" cy="8" r="7" fill="none" stroke="#bdbdbd" strokeWidth="1.600" /><text x="4.300" y="12" fontSize="11" fontFamily="Liberation Sans" fontWeight="700" fill="#bdbdbd">S</text></svg>
              <span className="ml-[13px] text-[14px] text-[#bfbfbf]">产妇坠亡4大疑点</span>
              <svg viewBox="0 0 16 16" className="ml-auto size-[16px]"><circle cx="7.500" cy="7.500" r="5.800" fill="none" stroke="#7fa3cf" strokeWidth="2.400" /><path d="m11 11 3.500 4" stroke="#7fa3cf" strokeWidth="2.400" /></svg>
            </div>
            <svg viewBox="0 0 17 17" className="ml-[12px] size-[17px]"><rect x="6" y="1" width="10" height="15" rx="1.500" fill="#dce9f8" stroke="#6f93c6" strokeWidth="2" /><path d="M0 5.500h5V2l6 5.500L5 13V9.500H0z" fill="#f5b73c" /></svg>
            <svg viewBox="0 0 17 17" className="ml-[13px] size-[17px]"><path d="M4.500 1 10 11M11.500 1 6 11" stroke="#8096b8" strokeWidth="2" /><circle cx="4.300" cy="12.500" r="3.200" fill="none" stroke="#6a6ab8" strokeWidth="2" /><circle cx="12" cy="12.500" r="3.200" fill="none" stroke="#6a6ab8" strokeWidth="2" /></svg>
            <svg viewBox="0 0 8 5" className="ml-[5px] h-[4px] w-[6px]"><path d="M0 0h8L4 5z" fill="#7c9fcb" /></svg>
            <FaKey className="ml-[13px] size-[15px] -scale-x-100 text-[#f0a43c]" />
            <svg viewBox="0 0 14 17" className="ml-[16px] h-[17px] w-[13px]"><path d="M1 5h11v11H1z" fill="#e9492e" /><path d="M2 5 8 1l4 3" fill="none" stroke="#e9492e" strokeWidth="1.400" /><path d="M2.500 6.500h9v2h-9z" fill="#fff" /><path d="M9.500 9.500h-4V12h4v2.500h-5" fill="none" stroke="#fff" strokeWidth="1.500" /></svg>
            <svg viewBox="0 0 17 18" className="ml-[14px] h-[18px] w-[17px]"><path d="M8 2.500 15 4v5q-1 5-7 8Q2 14 1.500 9V3z" fill="#fff" stroke="#2468e8" strokeWidth="2" /><path d="M4 7l4 3.500 4-3.500" fill="none" stroke="#2468e8" strokeWidth="2" /><circle cx="13.500" cy="3.500" r="3.500" fill="#e03a34" /></svg>
            <svg viewBox="0 0 16 16" className="ml-[14px] size-[16px]"><circle cx="8" cy="8" r="8" fill="#a9c1e2" /><circle cx="4" cy="8" r="1" fill="#fff" /><circle cx="8" cy="8" r="1" fill="#fff" /><circle cx="12" cy="8" r="1" fill="#fff" /></svg>
            <svg viewBox="0 0 16 17" className="ml-[17px] h-[17px] w-[16px]"><path d="M8 0v12M3 7l5 5 5-5M0 15.500h16" fill="none" stroke="#2e7fc4" strokeWidth="2" /></svg>
          </div>
          <div className="flex h-[33px] items-center pt-px whitespace-nowrap">
            {bookmarks.map(([k, t, c], i) => <div key={i} className={`flex shrink-0 items-center gap-[2px] ${c}`}><Fav kind={k} />{t}</div>)}
          </div>
        </div>
      </div>
      <div className="flex h-[28px] items-start border-b-2 border-white text-[#1d4a7c]">
        <div className="flex h-[26px] w-[1920px] items-start border-b border-[#b4c9e6]">
          <svg viewBox="0 0 18 18" className="mt-[5px] ml-[15px] size-[18px]"><path d="M1.500 9.500 9 2l7.500 7.500H13.500V16h-9V9.500z" fill="#f2f7fd" stroke="#7297c8" strokeWidth="1.700" strokeLinejoin="round" /></svg>
          <div className="ml-[8px] flex">
            {tabs.map(([k, t, c], i) => (
              <div key={i} className={`relative mr-[-4.870px] flex h-[26px] w-[119px] shrink-0 items-center pl-[14px] ${i === 6 ? "z-10" : ""}`}>
                <svg viewBox="0 0 119 26" className="absolute inset-0 h-[26px] w-[119px]"><path d="M0 26C4 25 6 4 9 2q1-1.500 3-1.500h95q2 0 3 1.500c3 3 5 22 9 24" fill={i === 6 ? "#fdfeff" : "#e4eefa"} stroke="#b4c9e6" /></svg>
                <Fav kind={k} className="relative size-[16px]" />
                <span className={`relative ml-[3px] w-[64px] shrink-0 whitespace-nowrap [mask-image:linear-gradient(to_right,#000_60%,rgba(0,0,0,.15)_95%)] ${c}`}>{t}</span>
                <svg viewBox="0 0 8 8" className="relative ml-[2px] size-[8px] shrink-0"><path d="m1 1 6 6M7 1 1 7" stroke="#a0bbdd" strokeWidth="2" /></svg>
              </div>
            ))}
          </div>
          <svg viewBox="0 0 30 18" className="mt-[4px] ml-[14px] h-[18px] w-[30px]"><path d="M1 2q0-1.500 2-1.500h20q2 0 2.500 1.500L29 16q0 1.500-2 1.500H8q-2 0-2.500-1.500z" fill="#eaf2fb" stroke="#b4c9e6" /><path d="M15 5v8M11 9h8" stroke="#8aa9d2" strokeWidth="1.700" /></svg>
        </div>
      </div>
    </header>
  );
}

function Bug({ className }: { className: string }) {
  return (
    <svg viewBox="0 0 28 29" className={className}>
      <path d="M2 1l7 7M26 1l-7 7M0 13h8M28 13h-8M2 24l7-6M26 24l-7-6" stroke="currentColor" strokeWidth="2" />
      <path d="M7 5q7-5 14 0v16H7zM9 24h10q-1 5-5 5t-5-5z" fill="currentColor" /><path d="M14 4v11M14 17v3" stroke="#fff" strokeOpacity=".9" strokeWidth="1.800" />
    </svg>
  );
}

const nav: [ReactNode, string, string, boolean][] = [
  [<FaHome className="size-[14px]" />, "GENERAL", "w-[125px] tracking-[-0.35px]", true],
  [<Bug className="size-[14px] [&_path:last-child]:stroke-[#333]" />, "VULNERABILITIES", "w-[179px] tracking-[-0.28px]", true],
  [<FaBalanceScale className="size-[17px]" />, "VULNERABILITY METRICS", "w-[241px] tracking-[-0.14px]", true],
  [<FaWrench className="size-[13px]" />, "PRODUCTS", "w-[135px] tracking-[-0.2px]", true],
  [<FaRegCheckSquare className="size-[14px]" />, "CONFIGURATIONS (CCE)", "w-[215px] tracking-[-0.11px]", false],
  [<FaInfoCircle className="size-[13px]" />, "INFO", "w-[92px] tracking-[0px]", true],
  [<FaPlus className="size-[12px]" />, "OTHER SITES", "w-[148px] tracking-[-0.21px]", true],
  [<FaSearch className="size-[14px]" />, "SEARCH", "w-[100px] tracking-[-0.5px]", true],
];

function Field({ label, w, track = "", children }: { label: string; w: string; track?: string; children: ReactNode }) {
  return (
    <div className="flex h-[20px] items-center whitespace-nowrap">
      <dt className={`shrink-0 text-right font-bold ${w}`}>{label}</dt>
      <dd className={`ml-[5px] ${track}`}>{children}</dd>
    </div>
  );
}

const link = "text-[#337ab7]";

function VulnPage() {
  return (
    <main className="flex min-h-0 flex-1 overflow-hidden bg-white font-['Liberation_Sans',Arial,sans-serif] text-[14px] leading-[20px] text-[#333]">
      <div className="flex w-[1903px] shrink-0 flex-col">
        <nav className="relative z-10 flex h-[35px] shrink-0 items-center bg-[#333] pb-[5px] pl-[311px] font-bold text-white shadow-[0_3px_8px_rgba(0,0,0,.5)]">
          {nav.map(([icon, t, c, caret]) => (
            <div key={t} className={`flex shrink-0 items-center gap-[4px] whitespace-nowrap ${c}`}>{icon}<span>{t}</span>{caret && <FaCaretDown className="h-[14px] w-[9px]" />}</div>
          ))}
        </nav>
        <div className="ml-[282px] w-[1340px]">
          <div className="flex h-[36px] items-center rounded-b-[4px] bg-[#f4f4f4] pl-[15px]"><p className="tracking-[0.05px]"><span className={link}>Vulnerabilities</span> › Detail</p></div>
          <h1 className="flex h-[63px] items-center gap-[11px] border-b border-[#eee] pt-[8px] pl-[1px] text-[32px] leading-[36px]"><Bug className="mt-[3px] h-[29px] w-[28px]" />CVE-2012-0957 Detail</h1>
          <div className="mt-[15px] h-[89px] rounded-[4px] border border-[#9acfea] bg-gradient-to-b from-[#d9edf7] to-[#b9def0] px-[15px] pt-[21px] text-[#31708f] shadow-[0_1px_2px_rgba(0,0,0,.05),inset_0_1px_0_rgba(255,255,255,.25)]">
            <h4 className="flex h-[22px] items-center gap-[7px] text-[20px] tracking-[-0.2px]"><FaExclamationCircle className="size-[17px]" />Modified</h4>
            <p className="mt-[10px] tracking-[0.059px]">This vulnerability has been modified since it was last analyzed by the NVD. It is awaiting reanalysis which may result in further changes to the information provided.</p>
          </div>
          <div className="flex h-[200px] items-start">
            <section className="w-[913px] whitespace-nowrap">
              <h2 className="mt-[33px] text-[27.500px] leading-[34px]">Description</h2>
              <p className="mt-[7px] tracking-[0.103px]">The override_release function in kernel/sys.c in the Linux kernel before 3.4.16 allows local users to obtain sensitive information from kernel</p>
              <p className="tracking-[-0.023px]">stack memory via a uname system call in conjunction with a UNAME26 personality.</p>
              <p className="mt-[10px] flex"><b className="w-[62px] tracking-[0.12px]">Source:</b><span className="w-[66px] tracking-[-0.3px]">MITRE</span><b className="w-[108px] tracking-[0.29px]">Last Modified:</b><span className="tracking-[0.19px]">12/21/2012</span></p>
            </section>
            <aside className="mt-[20px] h-[167px] w-[426px] border-l-[5px] border-[#cfe3f1] bg-[#f0f7fd] pl-[15px]">
              <h4 className="mt-[21px] mb-[8px] flex h-[23px] items-center gap-[6px] text-[20px]"><FaInfoCircle className="size-[17px]" />Quick Info</h4>
              <dl>
                <Field label="CVE Dictionary Entry:" w="w-[200px]" track="tracking-[0.12px]"><span className={link}>CVE-2012-0957</span></Field>
                <Field label="Original release date:" w="w-[200px] tracking-[0.39px]" track="tracking-[0.19px]">12/21/2012</Field>
                <Field label="Last revised:" w="w-[200px] tracking-[0.39px]" track="tracking-[0.19px]">08/21/2013</Field>
                <Field label="Source:" w="w-[200px] tracking-[0.12px]" track="tracking-[-0.22px]">US-CERT/NIST</Field>
              </dl>
            </aside>
          </div>
          <h2 className="text-[27.500px] leading-[34px]">Impact</h2>
          <h5 className="mt-[8px] pl-[15px] text-[17px] leading-[22px] tracking-[-0.22px]">CVSS Severity (version 2.0):</h5>
          <dl className="mt-[9px] h-[80px]">
            <Field label="CVSS v2 Base Score:" w="w-[215px] tracking-[0.19px]" track="tracking-[-0.1px]"><span className={link}>4.9</span> MEDIUM</Field>
            <Field label="Vector:" w="w-[215px]" track="tracking-[-0.04px]"><span className={link}>(AV:L/AC:L/Au:N/C:C/I:N/A:N)</span> <span className={link}>(legend)</span></Field>
            <Field label="Impact Subscore:" w="w-[215px] tracking-[0.19px]">6.9</Field>
            <Field label="Exploitability Subscore:" w="w-[215px] tracking-[0.19px]">3.9</Field>
          </dl>
          <h5 className="mt-[17px] pl-[15px] text-[17px] leading-[22px] tracking-[-0.18px]">CVSS Version 2 Metrics:</h5>
          <dl className="mt-[9px] h-[80px]">
            <Field label="Access Vector:" w="w-[215px] tracking-[0.3px]">Locally exploitable</Field>
            <Field label="Access Complexity:" w="w-[215px] tracking-[0.15px]">Low</Field>
            <Field label="Authentication:" w="w-[215px] tracking-[0.15px]">Not required to exploit</Field>
            <Field label="Impact Type:" w="w-[215px]" track="tracking-[0.046px]">Allows unauthorized disclosure of information</Field>
          </dl>
          <h3 className="mt-[27px] text-[25px] leading-[32px] tracking-[0.097px]">References to Advisories, Solutions, and Tools</h3>
          <div className="mt-[8px] whitespace-nowrap">
            <p className="tracking-[0.064px]">By selecting these links, you will be leaving NIST webspace. We have provided these links to other web sites because they may have information that would be of interest to you. No inferences should be drawn</p>
            <p className="tracking-[0.112px]">on account of other sites being referenced, or not, from this page. There may be other web sites that are more appropriate for your purpose. NIST does not necessarily endorse the views expressed, or concur</p>
            <p className="tracking-[0.096px]">with the facts presented on these sites. Further, NIST does not endorse any commercial products that may be mentioned on these sites. Please address comments about this page to <span className={link}>nvd@nist.gov</span>.</p>
          </div>
          <div className="mt-[10px] w-[1309px] text-[12px] leading-[17px] whitespace-nowrap">
            <div className="grid h-[21px] grid-cols-[569px_57px_74px_57px_1fr] border-b-2 border-[#ddd] pt-[1px] pl-px font-bold"><span>Hyperlink</span><span>Resource</span><span>Type</span><span>Source</span><span>Name</span></div>
            <div className="grid grid-cols-[569px_57px_74px_57px_1fr] bg-[#f9f9f9] pt-[1px] pl-px">
              <div className={link}><p className="tracking-[0.068px]">http://git.kernel.org/?p=linux/kernel/git/torvalds/linux-</p><p className="tracking-[0.25px]">2.6.git;a=commit;h=2702b1526c7278c4d65d78de209a465d4de2885e</p></div>
              <p>Patch</p>
              <div><p>External</p><p>Source</p></div>
              <p className="tracking-[-0.1px]">CONFIRM</p>
              <div><p className="tracking-[0.068px]">http://git.kernel.org/?p=linux/kernel/git/torvalds/linux-</p><p className="tracking-[0.25px]">2.6.git;a=commit;h=2702b1526c7278c4d65d78de209a465d4de2885e</p></div>
            </div>
          </div>
        </div>
      </div>
      <div className="flex flex-1 flex-col items-center bg-[#f1f1f1]">
        <svg viewBox="0 0 8 5" className="mt-[7px] h-[5px] w-[7px]"><path d="M0 5h8L4 0z" fill="#505050" /></svg>
        <div className="mt-[26px] h-[200px] w-[13px] bg-[#c1c1c1]" />
        <svg viewBox="0 0 8 5" className="mt-auto mb-[7px] h-[5px] w-[7px]"><path d="M0 0h8L4 5z" fill="#505050" /></svg>
      </div>
    </main>
  );
}

function StatusBar() {
  const s = { fill: "none", stroke: "#4f7299", strokeWidth: 1.6 } as const;
  return (
    <footer className="flex h-[20px] shrink-0 items-center border-t border-[#a9c4e0] bg-gradient-to-b from-[#dfecfc] to-[#cbdef2] pr-[7px] pl-[12px] font-['Open_Sans','Noto_Sans_CJK_SC',sans-serif] text-[12px] text-[#1d4a7c]">
      <svg viewBox="0 0 14 14" className="h-[13px] w-[13px]"><path d="M1.500 1v12M5.500 1.500v11L12.500 7z" {...s} /></svg>
      <span className="ml-[10px] h-full w-px bg-[#b5cbe4]" /><span className="ml-[6px]">完成</span>
      <svg viewBox="0 0 17 14" className="ml-auto h-[14px] w-[17px]"><path d="M1 5h3l4-4v12L4 9H1z" {...s} /><path d="M10.500 4.500q2 2.500 0 5M13 2.500q4 4.500 0 9" {...s} strokeWidth="1.200" /></svg>
      <svg viewBox="0 0 14 14" className="ml-[17px] size-[14px]"><path d="M1 4h12v9H1zM5 4V1.500h4V4M7 6v5M4.500 8.500h5" {...s} /></svg>
      <svg viewBox="0 0 14 14" className="ml-[19px] size-[14px]"><path d="M1 1.500h12V8q-1 4-6 5.500Q2 12 1 8z" {...s} /><path d="M4 9l1.500-4L7 9M8.500 5v4q2.500-2 0-4" {...s} strokeWidth=".9" /></svg>
      <span className="ml-[3px] w-[8px]">0</span>
      <svg viewBox="0 0 14 14" className="ml-[16px] size-[14px]"><circle cx="6.500" cy="6.500" r="5.300" {...s} /><path d="M10.500 10.500 13 13M6.500 4v5M4 6.500h5" {...s} /></svg>
      <span className="ml-[4px] w-[31px] tracking-[-0.12px]">100%</span>
    </footer>
  );
}

const taskArt: [ReactNode, string][] = [
  [<svg viewBox="0 0 16 16" className="size-[17px]"><path d="M0 2.300 6.800 1.300v6.200H0zM7.800 1.200 16 0v7.500H7.800zM0 8.500h6.800v6.200L0 13.700zM7.800 8.500H16V16l-8.200-1.200z" fill="#fff" /></svg>, "w-[48px]"],
  [<svg viewBox="0 0 18 18" className="size-[17px]"><circle cx="9" cy="9" r="7" fill="none" stroke="#fff" strokeWidth="2" /></svg>, "w-[48px]"],
  [<svg viewBox="0 0 20 16" className="h-[15px] w-[20px]"><path d="M4.500 1h11v14h-11z" fill="none" stroke="#fff" strokeWidth="1.500" /><path d="M3 3H.7v10H3M17 3h2.300v10H17" fill="none" stroke="#fff" strokeWidth="1.200" /></svg>, "w-[49px]"],
  [<svg viewBox="0 0 20 22" className="h-[22px] w-[20px]"><path d="M0 10C1 3 5 0 10 0c7 0 10 5 10 12H7c0 4 2 6 6 6q3 0 5.500-1.500v4Q16 22 12 22C6 22 3 18 3 13c0-4 2-6 5-8-5 0-7 2-8 5zm7-1.500h7Q14 5 10.500 5T7 8.500z" fill="#0c7bdc" /></svg>, "w-[49px]"],
  [<svg viewBox="0 0 22 20" className="h-[19px] w-[22px]"><path d="M0 2h8l2 2h12v15H0z" fill="#f5d068" /><path d="M0 6h22v5H0z" fill="#fbe08d" /><path d="M3 11h16v8h-4v-4H8v4H3z" fill="#3fa9e8" /></svg>, "w-[49px]"],
  [<svg viewBox="0 0 22 24" className="h-[23px] w-[21px]"><path d="M1 7l20-2v18L1 21z" fill="#fff" /><path d="M6 6V3q1-2 5-2 3 0 4 3v2" fill="none" stroke="#fff" strokeWidth="1.500" /><path d="M5 11h5v3.500H5zM11.500 10.500H17v4h-5.500zM5 16h5v3.500H5zM11.500 16H17v4h-5.500z" fill="#0e1c11" /></svg>, "w-[49px]"],
  [<svg viewBox="0 0 22 22" className="h-[20px] w-[22px]"><rect x="0" y="0" width="22" height="22" rx="2" fill="#8d8d8d" /><path d="M2 1h18v16H2z" fill="#4b4b4b" /><path d="M15 4.500 8 6q-1 2.500 3 3t3 3.500L7 14" fill="none" stroke="#f39a24" strokeWidth="2.400" /></svg>, "w-[49px] b"],
  [<span className="flex h-[23px] w-[24px] items-center justify-center rounded-[3px] bg-[#e2191c] text-[10px] font-bold text-white">有道</span>, "w-[49px]"],
  [<svg viewBox="0 0 24 23" className="h-[23px] w-[24px]"><rect width="24" height="23" rx="3" fill="#e62410" /><path d="M16 4q-3-1-3 2l1.500 7q0 3-2.500 3t-2.500-3q0-3 4-3 4.500 0 4.500 4 0 5-6 5t-6-6q0-4 4-6" fill="none" stroke="#fff" strokeWidth="1.600" /></svg>, "w-[49px]"],
  [<span className="flex h-[23px] w-[22px] items-center justify-center rounded-[3px] bg-gradient-to-b from-[#e2f0fa] to-white"><Bird id="bird-task" className="h-[18px] w-[20px]" /></span>, "w-[49px] b"],
  [<SogouS className="size-[24px]" bg="#4a92ec" />, "w-[49px] a"],
  [<svg viewBox="0 0 22 22" className="h-[22px] w-[22px]"><path d="M6.500 1.500h14v14h-14z" fill="none" stroke="#3fb4d8" strokeWidth="3.500" /><path d="M2 6h13v14H2z" fill="none" stroke="#f2a81d" strokeWidth="4" /><path d="M6 10h5v6H6z" fill="#3a3420" /></svg>, "w-[49px] b"],
  [<svg viewBox="0 0 24 24" className="size-[24px]"><circle cx="11" cy="13.500" r="10" fill="#8cc5ee" /><path d="M2 12q9 5 18 0v5q-9 5-18 0z" fill="#dff0fb" /><circle cx="11" cy="13.500" r="10" fill="none" stroke="#4f9bd0" /><path d="M20 1 13 13l-1 2" stroke="#3fc33c" strokeWidth="2.200" /></svg>, "w-[49px]"],
  [<svg viewBox="0 0 24 20" className="h-[20px] w-[24px]"><path d="M0 7 12 0l12 7v13H0z" fill="#fff" /><path d="M5 6h16l-7 6v4z" fill="#0e1c11" /></svg>, "w-[49px]"],
  [<span className="relative"><SogouS className="size-[23px]" bg="#4a92ec" /><svg viewBox="0 0 14 14" className="absolute -right-[4px] -bottom-[2px] size-[14px]"><circle cx="7" cy="7" r="6.500" fill="#5b86c4" /><path d="M7 2.500v6M3.800 7 7 10.500 10.200 7" stroke="#fff" strokeWidth="2.200" fill="none" /></svg></span>, "w-[49px] b"],
  [<svg viewBox="0 0 24 20" className="h-[19px] w-[24px]"><path d="M1 1h21v6H1z" fill="#b03ab0" /><path d="M1 7h21v6H1z" fill="#3a58c8" /><path d="M1 13h21v6H1z" fill="#2f9a3a" /><path d="M1 3h21M1 9h21M1 15h21" stroke="#fff" strokeOpacity=".45" /><path d="M9 0h5v20H9z" fill="#7a4a22" /><rect x="8.500" y="7" width="6" height="5" fill="none" stroke="#e8c04a" strokeWidth="1.300" /></svg>, "w-[49px] b"],
];

function Taskbar() {
  return (
    <footer className="flex h-[40px] shrink-0 bg-[linear-gradient(65deg,#0e1c11_0_130px,#09130c_130px_170px,#0e1c11_170px_430px,#09130c_430px_470px,#0e1c11_470px_760px,#09130c_760px_820px,#0e1c11_820px)] font-['Open_Sans','Noto_Sans_CJK_SC',sans-serif] text-[12px] text-white">
      {taskArt.map(([art, c], i) => (
        <div key={i} className={`relative flex shrink-0 items-center justify-center ${c.startsWith("w-[48px]") ? "w-[48px]" : "w-[49px]"} ${c.endsWith(" a") ? "bg-[#424c44]" : ""}`}>
          {art}
          {c.endsWith(" b") && <span className="absolute bottom-0 left-[4px] h-[2px] w-[40px] bg-[#9deedd]" />}
          {c.endsWith(" a") && <span className="absolute bottom-0 left-0 h-[2px] w-full bg-[#9deedd]" />}
        </div>
      ))}
      <div className="mr-[10px] ml-auto flex flex-col items-center justify-center leading-[19px] tracking-[0.1px]"><span>10:09</span><span className="tracking-[0.25px]">2017/9/7</span></div>
    </footer>
  );
}

export default function App() {
  return (
    <div className="flex h-[1080px] w-[3840px] overflow-hidden bg-white">
      <UbuntuDesktop />
      <section className="flex h-full w-[1920px] shrink-0 flex-col">
        <BrowserChrome />
        <VulnPage />
        <StatusBar />
        <Taskbar />
      </section>
    </div>
  );
}
